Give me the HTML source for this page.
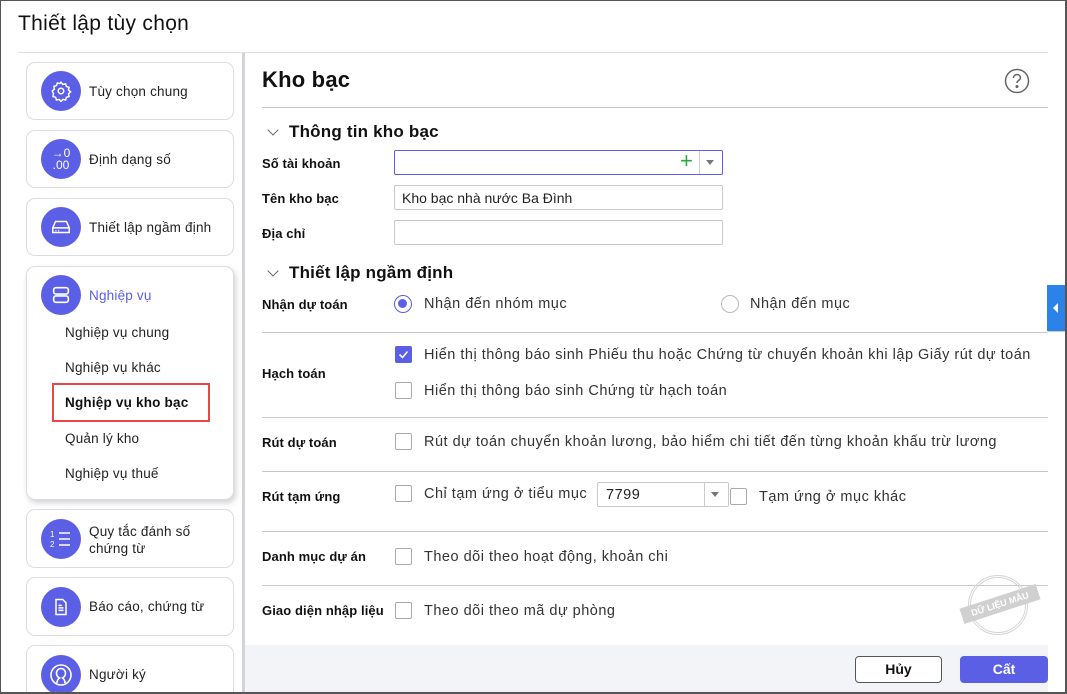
<!DOCTYPE html><html><head><meta charset="utf-8"><style>
*{box-sizing:border-box;margin:0;padding:0}
html,body{width:1067px;height:694px;overflow:hidden}
body{background:#fff;font-family:"Liberation Sans",Arial,sans-serif;color:#111;position:relative}
.a{position:absolute}
.frame{left:0;top:0;width:1067px;height:694px;border:1px solid #555;border-bottom:2px solid #555;border-right:2px solid #555}
.card{position:absolute;left:26px;width:208px;border:1px solid #dcdde3;border-radius:9px;background:#fff}
.ic{position:absolute;left:14px;width:40px;height:40px;border-radius:50%;background:#5b5fe6;display:flex;align-items:center;justify-content:center}
.ct{position:absolute;left:62px;font-size:13.5px;color:#222;letter-spacing:.2px}
.sub{position:absolute;left:38px;font-size:13.5px;color:#222;letter-spacing:.2px}
.lbl{position:absolute;left:262px;font-size:13px;font-weight:bold;color:#111;letter-spacing:.1px}
.inp{position:absolute;left:394px;width:329px;height:25px;border:1px solid #c8c8cc;border-radius:2px;font-size:14px;padding:4px 7px;color:#222}
.sec{position:absolute;left:289px;font-size:17px;font-weight:bold;letter-spacing:.2px}
.chev{position:absolute;left:269px;width:8px;height:8px;border-right:1.5px solid #666;border-bottom:1.5px solid #666;transform:rotate(45deg)}
.cb{position:absolute;left:395px;width:17px;height:17px;border:1px solid #aaa;border-radius:2px;background:#fff}
.tx{position:absolute;left:424px;font-size:14.5px;color:#333;letter-spacing:.5px;white-space:nowrap}
.sep{position:absolute;left:262px;width:786px;height:1px;background:#c9c9cc}
</style></head><body>
<div class="a" style="left:18px;top:12px;font-size:21px;color:#111;letter-spacing:.3px">Thiết lập tùy chọn</div>
<div class="a" style="left:18px;top:52px;width:1030px;height:1px;background:#e0e0e3"></div>
<div class="a" style="left:242px;top:53px;width:3px;height:641px;background:#d3d3d8"></div>
<div class="a" style="left:245px;top:645px;width:803px;height:49px;background:#f3f4f7"></div>

<div class="card" style="top:62px;height:58px"><div class="ic" style="top:8px"><svg width="22" height="22" viewBox="0 0 24 24" fill="none" stroke="#fff" stroke-width="1.6"><circle cx="12" cy="12" r="3"/><path d="M12 2.5l2 2.3 3-.6.9 2.9 2.9.9-.6 3 2.3 2-2.3 2 .6 3-2.9.9-.9 2.9-3-.6-2 2.3-2-2.3-3 .6-.9-2.9-2.9-.9.6-3L2.5 12l2.3-2-.6-3 2.9-.9.9-2.9 3 .6z"/></svg></div><div class="ct" style="top:21px">Tùy chọn chung</div></div>
<div class="card" style="top:130px;height:58px"><div class="ic" style="top:8px;color:#fff;font-size:12px;line-height:12px;text-align:center">→0<br>.00</div><div class="ct" style="top:21px">Định dạng số</div></div>
<div class="card" style="top:198px;height:58px"><div class="ic" style="top:8px"><svg width="22" height="22" viewBox="0 0 24 24" fill="none" stroke="#fff" stroke-width="1.6"><path d="M3 13l3-7h12l3 7v5H3z M3 13h18"/><path d="M6 16h1M9 16h1"/></svg></div><div class="ct" style="top:21px">Thiết lập ngầm định</div></div>
<div class="card" style="top:266px;height:234px;box-shadow:2px 3px 6px rgba(0,0,0,.18)"><div class="ic" style="top:8px"><svg width="22" height="22" viewBox="0 0 24 24" fill="none" stroke="#fff" stroke-width="1.8"><rect x="4" y="4" width="16" height="7" rx="2.5"/><rect x="4" y="13" width="16" height="7" rx="2.5"/></svg></div><div class="ct" style="top:21px;color:#5b5fe6;font-weight:500">Nghiệp vụ</div>
<div class="sub" style="top:58px">Nghiệp vụ chung</div><div class="sub" style="top:93px">Nghiệp vụ khác</div>
<div class="a" style="left:25px;top:116px;width:158px;height:39px;border:2px solid #ec4548"></div>
<div class="sub" style="top:128px;font-weight:bold;color:#111">Nghiệp vụ kho bạc</div>
<div class="sub" style="top:164px">Quản lý kho</div><div class="sub" style="top:199px">Nghiệp vụ thuế</div></div>
<div class="card" style="top:509px;height:59px"><div class="ic" style="top:9px"><svg width="24" height="22" viewBox="0 0 24 22" fill="none" stroke="#fff" stroke-width="1.6"><path d="M10 5h11M10 11h11M10 17h11"/><text x="1" y="9" fill="#fff" stroke="none" font-size="8" font-family="Liberation Sans">1</text><text x="1" y="19" fill="#fff" stroke="none" font-size="8" font-family="Liberation Sans">2</text></svg></div><div class="ct" style="top:13px;line-height:17px">Quy tắc đánh số<br>chứng từ</div></div>
<div class="card" style="top:577px;height:59px"><div class="ic" style="top:9px"><svg width="20" height="20" viewBox="0 0 24 24" fill="none" stroke="#fff" stroke-width="1.8"><path d="M6 3h8l4 4v14H6z M9 10h4M9 13h6M9 16h6"/></svg></div><div class="ct" style="top:21px">Báo cáo, chứng từ</div></div>
<div class="card" style="top:645px;height:49px;border-bottom:none;border-radius:9px 9px 0 0"><div class="ic" style="top:9px"><svg width="24" height="24" viewBox="0 0 24 24" fill="none" stroke="#fff" stroke-width="1.6"><circle cx="12" cy="12" r="10"/><path d="M8 20c0-3 1-4 2.5-5-2-1-3-3-3-5a4.5 4.5 0 019 0c0 2-1 4-3 5 1.5 1 2.5 2 2.5 5"/></svg></div><div class="ct" style="top:21px">Người ký</div></div>

<div class="a" style="left:262px;top:67px;font-size:22px;font-weight:bold;letter-spacing:.2px">Kho bạc</div>
<svg class="a" style="left:1004px;top:68px" width="26" height="26" viewBox="0 0 26 26" fill="none" stroke="#666" stroke-width="1.5"><circle cx="13" cy="13" r="11.5"/><path d="M9.5 10a3.5 3.5 0 117 0c0 2-3.5 2.3-3.5 5"/><circle cx="13" cy="18.5" r=".8" fill="#666"/></svg>
<div class="a" style="left:262px;top:107px;width:786px;height:1px;background:#c9c9cc"></div>

<div class="chev" style="top:126px"></div><div class="sec" style="top:122px">Thông tin kho bạc</div>
<div class="lbl" style="top:156px">Số tài khoản</div>
<div class="inp" style="top:150px;border-color:#5b5fe6"><span class="a" style="left:285px;top:-1px;color:#2eaa3c;font-size:22px;line-height:22px">+</span><span class="a" style="left:304px;top:0;width:1px;height:23px;background:#ccc"></span><span class="a" style="left:311px;top:9px;border:4.5px solid transparent;border-top:5px solid #777"></span></div>
<div class="lbl" style="top:191px">Tên kho bạc</div>
<div class="inp" style="top:185px">Kho bạc nhà nước Ba Đình</div>
<div class="lbl" style="top:226px">Địa chỉ</div>
<div class="inp" style="top:220px"></div>

<div class="chev" style="top:267px"></div><div class="sec" style="top:263px">Thiết lập ngầm định</div>
<div class="lbl" style="top:297px">Nhận dự toán</div>
<div class="a" style="left:394px;top:295px;width:18px;height:18px;border:1.5px solid #5b5fe6;border-radius:50%"><div class="a" style="left:3px;top:3px;width:9px;height:9px;border-radius:50%;background:#5b5fe6"></div></div>
<div class="tx" style="top:296px">Nhận đến nhóm mục</div>
<div class="a" style="left:721px;top:295px;width:18px;height:18px;border:1px solid #bbb;border-radius:50%"></div>
<div class="tx" style="left:750px;top:296px">Nhận đến mục</div>
<div class="sep" style="top:332px"></div>

<div class="lbl" style="top:366px">Hạch toán</div>
<div class="cb" style="top:346px;background:#5b5fe6;border-color:#5b5fe6"><svg width="15" height="15" viewBox="0 0 15 15" style="position:absolute;left:0;top:0"><path d="M3.5 7.5l3 3 5-6" fill="none" stroke="#fff" stroke-width="1.6"/></svg></div>
<div class="tx" style="top:347px">Hiển thị thông báo sinh Phiếu thu hoặc Chứng từ chuyển khoản khi lập Giấy rút dự toán</div>
<div class="cb" style="top:382px"></div>
<div class="tx" style="top:383px">Hiển thị thông báo sinh Chứng từ hạch toán</div>
<div class="sep" style="top:417px"></div>

<div class="lbl" style="top:435px">Rút dự toán</div>
<div class="cb" style="top:433px"></div>
<div class="tx" style="top:434px">Rút dự toán chuyển khoản lương, bảo hiểm chi tiết đến từng khoản khấu trừ lương</div>
<div class="sep" style="top:471px"></div>

<div class="lbl" style="top:489px">Rút tạm ứng</div>
<div class="cb" style="top:485px"></div>
<div class="tx" style="top:486px">Chỉ tạm ứng ở tiểu mục</div>
<div class="a" style="left:597px;top:482px;width:132px;height:25px;border:1px solid #c8c8cc;border-radius:2px;font-size:14.5px;padding:4px 8px;color:#222;letter-spacing:.5px">7799<span class="a" style="left:106px;top:0;width:1px;height:23px;background:#ccc"></span><span class="a" style="left:113px;top:9px;border:4.5px solid transparent;border-top:5px solid #777"></span></div>
<div class="cb" style="left:730px;top:488px"></div>
<div class="tx" style="left:759px;top:489px">Tạm ứng ở mục khác</div>
<div class="sep" style="top:531px"></div>

<div class="lbl" style="top:549px">Danh mục dự án</div>
<div class="cb" style="top:548px"></div>
<div class="tx" style="top:549px">Theo dõi theo hoạt động, khoản chi</div>
<div class="sep" style="top:585px"></div>

<div class="lbl" style="top:603px">Giao diện nhập liệu</div>
<div class="cb" style="top:602px"></div>
<div class="tx" style="top:603px">Theo dõi theo mã dự phòng</div>

<div class="a" style="left:968px;top:575px;width:60px;height:60px;border:3px double #d5d5d5;border-radius:50%"></div>
<div class="a" style="left:960px;top:596px;width:80px;height:16px;background:#d0d0d0;color:#fff;font-size:9px;font-weight:bold;text-align:center;line-height:16px;transform:rotate(-18deg)">DỮ LIỆU MẪU</div>

<div class="a" style="left:855px;top:656px;width:87px;height:27px;border:1px solid #555;border-radius:4px;background:#fff;font-size:14px;font-weight:bold;text-align:center;line-height:25px">Hủy</div>
<div class="a" style="left:960px;top:656px;width:88px;height:27px;border-radius:4px;background:#5b5fe6;color:#fff;font-size:14px;font-weight:bold;text-align:center;line-height:27px">Cất</div>

<div class="a" style="left:1047px;top:285px;width:18px;height:46px;background:#2b83ea"><div class="a" style="left:6px;top:18px;border:5px solid transparent;border-right:5px solid #fff;border-left:0"></div></div>
<div class="a" style="left:1048px;top:331px;width:17px;height:1px;background:#c9c9cc"></div>
<div class="a frame"></div>
</body></html>
